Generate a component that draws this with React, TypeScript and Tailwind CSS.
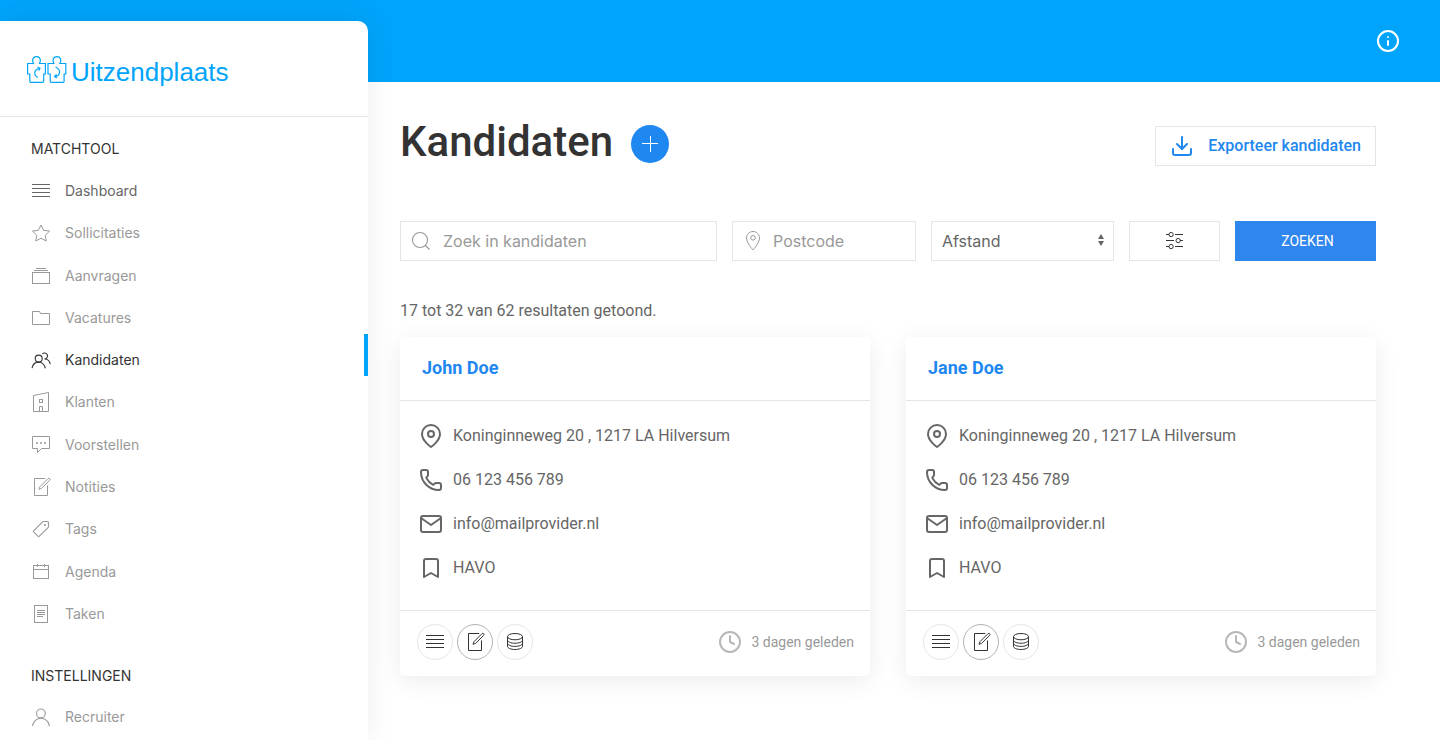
import { ReactNode } from "react";
import {
  Bookmark,
  Clock,
  Download,
  Info,
  Phone,
} from "lucide-react";

const Icon = ({ children }: { children: ReactNode }) => (
  <svg
    width="20"
    height="20"
    viewBox="0 0 20 20"
    fill="none"
    stroke="currentColor"
    className="shrink-0"
    aria-hidden="true"
  >
    {children}
  </svg>
);

const TableIcon = () => (
  <Icon>
    <path d="M1 3.5h18M1 7.5h18M1 11.5h18M1 15.5h18" />
  </Icon>
);

const StarIcon = () => (
  <Icon>
    <polygon points="10 2 12.63 7.27 18.5 8.12 14.25 12.22 15.25 18 10 15.27 4.75 18 5.75 12.22 1.5 8.12 7.37 7.27" />
  </Icon>
);

const AlbumIcon = () => (
  <Icon>
    <path d="M5 2.5h10M3 4.5h14" />
    <rect x="1.5" y="6.5" width="17" height="11" />
  </Icon>
);

const FolderIcon = () => (
  <Icon>
    <polygon points="9.5 5.5 8.5 3.5 1.5 3.5 1.5 16.5 18.5 16.5 18.5 5.5" />
  </Icon>
);

const UsersIcon = () => (
  <Icon>
    <circle strokeWidth="1.1" cx="7.7" cy="8.6" r="3.5" />
    <path
      strokeWidth="1.1"
      d="M1,18.1 C1.7,14.6 4.4,12.1 7.6,12.1 C10.9,12.1 13.7,14.8 14.3,18.3"
    />
    <path
      strokeWidth="1.1"
      d="M11.4,4 C12.8,2.4 15.4,2.8 16.3,4.7 C17.2,6.6 15.7,8.9 13.6,8.9 C16.5,8.9 18.8,11.3 19.2,14.1"
    />
  </Icon>
);

const BuildingIcon = () => (
  <Icon>
    <path d="M2.5 19.5V3.5L17.5 .5v19z" />
    <rect x="8.5" y="7.5" width="3" height="3" />
    <path d="M8.5 19.5v-5h3v5" />
  </Icon>
);

const CommentIcon = () => (
  <Icon>
    <polygon points="1.5 1.5 18.5 1.5 18.5 13.5 10.5 13.5 6.5 17.5 6.5 13.5 1.5 13.5" />
    <g fill="currentColor" stroke="none">
      <circle cx="6" cy="8" r="1" />
      <circle cx="10" cy="8" r="1" />
      <circle cx="14" cy="8" r="1" />
    </g>
  </Icon>
);

const EditIcon = () => (
  <Icon>
    <path d="M18.65,1.68 C18.41,1.45 18.109,1.33 17.81,1.33 C17.499,1.33 17.209,1.45 16.98,1.68 L8.92,9.76 L8,12.33 L10.55,11.41 L18.651,3.34 C19.12,2.87 19.12,2.15 18.65,1.68 Z" />
    <polyline points="16.5 8.482 16.5 18.5 3.5 18.5 3.5 1.5 14.211 1.5" />
  </Icon>
);

const TagIcon = () => (
  <Icon>
    <path
      strokeWidth="1.1"
      d="M17.5,3.71 L17.5,7.72 C17.5,7.96 17.4,8.2 17.21,8.39 L8.39,17.2 C7.99,17.6 7.33,17.6 6.93,17.2 L2.8,13.07 C2.4,12.67 2.4,12.01 2.8,11.61 L11.61,2.8 C11.81,2.6 12.08,2.5 12.34,2.5 L16.19,2.5 C16.52,2.5 16.86,2.63 17.11,2.88 C17.35,3.11 17.48,3.4 17.5,3.71 Z"
    />
    <circle cx="14" cy="6" r="1" fill="currentColor" stroke="none" />
  </Icon>
);

const CalendarIcon = () => (
  <Icon>
    <rect x="2.5" y="3.5" width="15" height="13" />
    <path d="M2.5 7.5h15M6.5 2v3M13.5 2v3" />
  </Icon>
);

const FileIcon = () => (
  <Icon>
    <rect x="3.5" y="1.5" width="13" height="17" />
    <path d="M6 6.5h8M6 8.5h8M6 10.5h8M6 12.5h6" />
  </Icon>
);

const UserIcon = () => (
  <Icon>
    <circle strokeWidth="1.1" cx="9.9" cy="6.4" r="4.4" />
    <path
      strokeWidth="1.1"
      d="M1.5,19 C2.3,14.5 5.8,11.2 10,11.2 C14.2,11.2 17.7,14.6 18.5,19.2"
    />
  </Icon>
);

const SearchIcon = () => (
  <Icon>
    <circle strokeWidth="1.1" cx="9" cy="9" r="7.5" />
    <path strokeWidth="1.1" d="M14,14 L18.5,18.5" />
  </Icon>
);

const LocationIcon = () => (
  <Icon>
    <path d="M10,0.5 C6.41,0.5 3.5,3.39 3.5,6.98 C3.5,11.83 10,19 10,19 C10,19 16.5,11.83 16.5,6.98 C16.5,3.39 13.59,0.5 10,0.5 Z" />
    <circle cx="10" cy="6.8" r="2.3" />
  </Icon>
);

const SettingsIcon = () => (
  <Icon>
    <ellipse cx="6.11" cy="3.55" rx="2.11" ry="2.15" />
    <ellipse cx="6.11" cy="15.55" rx="2.11" ry="2.15" />
    <circle cx="13.15" cy="9.55" r="2.15" />
    <path d="M1 3.5h3M10 3.5h8M1 9.5h8M15 9.5h3M1 15.5h3M10 15.5h8" />
  </Icon>
);

const DatabaseIcon = () => (
  <Icon>
    <ellipse cx="10" cy="4.64" rx="7.5" ry="3.14" />
    <path d="M17.5,8.11 C17.5,9.85 14.14,11.25 10,11.25 C5.86,11.25 2.5,9.84 2.5,8.11" />
    <path d="M17.5,11.25 C17.5,12.99 14.14,14.39 10,14.39 C5.86,14.39 2.5,12.98 2.5,11.25" />
    <path d="M17.49,4.64 L17.5,14.36 C17.5,16.1 14.14,17.5 10,17.5 C5.86,17.5 2.5,16.09 2.5,14.36 L2.5,4.64" />
  </Icon>
);

const PlusIcon = () => (
  <Icon>
    <path d="M2 9.5h16M10.5 2v16" />
  </Icon>
);

const PinIcon = () => (
  <svg
    width="24"
    height="24"
    viewBox="0 0 24 24"
    fill="none"
    stroke="currentColor"
    strokeWidth="2"
    strokeLinecap="round"
    strokeLinejoin="round"
    aria-hidden="true"
  >
    <path d="M21 10c0 7-9 13-9 13s-9-6-9-13a9 9 0 0 1 18 0z" />
    <circle cx="12" cy="10" r="3" />
  </svg>
);

const MailIcon = () => (
  <svg
    width="24"
    height="24"
    viewBox="0 0 24 24"
    fill="none"
    stroke="currentColor"
    strokeWidth="2"
    strokeLinecap="round"
    strokeLinejoin="round"
    aria-hidden="true"
  >
    <path d="M4 4h16c1.1 0 2 .9 2 2v12c0 1.1-.9 2-2 2H4c-1.1 0-2-.9-2-2V6c0-1.1.9-2 2-2z" />
    <polyline points="22 6 12 13 2 6" />
  </svg>
);

const Logo = () => (
  <a href="#" className="flex items-start gap-1 text-[#00a4fb]">
    <svg
      width="40"
      height="28"
      viewBox="0 0 40 28"
      fill="none"
      stroke="currentColor"
      strokeWidth="1.2"
      aria-hidden="true"
    >
      <path d="M.6 7.5H6.5C4.5 4 6 .7 9.5 .7S14.5 4 12.5 7.5H18.4V18H16.7V25.2Q16.7 26.4 15.5 26.4H4Q2.8 26.4 2.8 25.2V18H.6Z" />
      <path d="M21 7.5H26.9C24.9 4 26.4 .7 29.9 .7S34.9 4 32.9 7.5H38.8V18H37.1V25.2Q37.1 26.4 35.9 26.4H24.4Q23.2 26.4 23.2 25.2V18H21Z" />
      <path d="M11 21.5C6.5 19.5 6.5 13.5 12.5 12.3M10.5 11l2.5 1.2-1.3 2.5" />
      <path d="M28.5 11C34 13.5 34 19.5 28 20.7M29.5 18.5l-2 2.2 2.5 1.3" />
    </svg>
    <span className="font-['Liberation_Sans',sans-serif] text-[26px] leading-8">
      Uitzendplaats
    </span>
  </a>
);

const navItems = [
  { label: "Dashboard", icon: <TableIcon />, color: "text-[#666]" },
  { label: "Sollicitaties", icon: <StarIcon />, color: "text-[#999]" },
  { label: "Aanvragen", icon: <AlbumIcon />, color: "text-[#999]" },
  { label: "Vacatures", icon: <FolderIcon />, color: "text-[#999]" },
  {
    label: "Kandidaten",
    icon: <UsersIcon />,
    color: "border-r-4 border-[#00a4fb] text-[#333]",
  },
  { label: "Klanten", icon: <BuildingIcon />, color: "text-[#999]" },
  { label: "Voorstellen", icon: <CommentIcon />, color: "text-[#999]" },
  { label: "Notities", icon: <EditIcon />, color: "text-[#999]" },
  { label: "Tags", icon: <TagIcon />, color: "text-[#999]" },
  { label: "Agenda", icon: <CalendarIcon />, color: "text-[#999]" },
  { label: "Taken", icon: <FileIcon />, color: "text-[#999]" },
];

const candidates = [
  {
    name: "John Doe",
    address: "Koninginneweg 20 , 1217 LA Hilversum",
    phone: "06 123 456 789",
    email: "info@mailprovider.nl",
    education: "HAVO",
    added: "3 dagen geleden",
  },
  {
    name: "Jane Doe",
    address: "Koninginneweg 20 , 1217 LA Hilversum",
    phone: "06 123 456 789",
    email: "info@mailprovider.nl",
    education: "HAVO",
    added: "3 dagen geleden",
  },
];

export default function App() {
  return (
    <div className="flex min-h-screen flex-col bg-white font-[Roboto,sans-serif] text-[#666]">
      <header className="flex h-[82px] items-center justify-end bg-[#00a4fb] px-10">
        <button aria-label="Informatie" className="text-white">
          <Info size={24} />
        </button>
      </header>
      <div className="flex flex-1">
        <Sidebar />
        <main className="min-w-0 flex-1 pl-8 pr-16">
          <div className="flex items-end justify-between pt-8">
            <div className="flex items-end gap-[18px]">
              <h1 className="text-[42px] font-medium leading-[56px] text-[#333]">
                Kandidaten
              </h1>
              <button
                aria-label="Kandidaat toevoegen"
                className="mb-[7px] flex size-[38px] items-center justify-center rounded-full bg-[#1e87f0] text-white"
              >
                <PlusIcon />
              </button>
            </div>
            <button className="mb-1 flex h-10 items-center gap-[14px] border border-[#e5e5e5] px-[14px] font-medium text-[#1e87f0]">
              <Download size={24} />
              Exporteer kandidaten
            </button>
          </div>
          <Filters />
          <p className="mt-[38px] leading-6">
            17 tot 32 van 62 resultaten getoond.
          </p>
          <div className="mt-[14px] grid grid-cols-2 gap-9">
            {candidates.map((candidate) => (
              <CandidateCard key={candidate.name} candidate={candidate} />
            ))}
          </div>
        </main>
      </div>
    </div>
  );
}

const Sidebar = () => (
  <aside className="-mt-[61px] w-[368px] shrink-0 rounded-tr-[10px] bg-white font-[Inter,sans-serif] text-sm shadow-[0_0_30px_rgba(0,0,0,0.08)]">
    <div className="border-b border-[#e5e5e5] px-[27px] pb-7 pt-[35px]">
      <Logo />
    </div>
    <nav>
      <h2 className="px-[31px] pt-[22px] leading-5 text-[#333]">MATCHTOOL</h2>
      {/* Menu rows share the height of the list equally */}
      <ul className="mt-[6px] grid h-[465px] auto-rows-fr">
        {navItems.map((item) => (
          <li key={item.label} className={`flex ${item.color}`}>
            <a
              href="#"
              className="flex flex-1 items-center gap-[14px] pl-[31px] pt-[10px]"
            >
              {item.icon}
              {item.label}
            </a>
          </li>
        ))}
      </ul>
      <h2 className="px-[31px] pt-9 leading-5 text-[#333]">INSTELLINGEN</h2>
      <a
        href="#"
        className="flex items-center gap-[14px] pl-[31px] pt-[21px] text-[#999]"
      >
        <UserIcon />
        Recruiter
      </a>
    </nav>
  </aside>
);

const Filters = () => (
  <form
    className="mt-[51px] grid grid-cols-[317fr_184fr_183fr_91fr_141fr] gap-[15px] font-[Inter,sans-serif]"
    onSubmit={(e) => e.preventDefault()}
  >
    <label className="flex h-10 items-center gap-3 border border-[#e5e5e5] px-[10px] text-[#999]">
      <SearchIcon />
      <input
        type="text"
        aria-label="Zoek in kandidaten"
        placeholder="Zoek in kandidaten"
        className="w-full min-w-0 outline-none placeholder:text-[#999]"
      />
    </label>
    <label className="flex h-10 items-center gap-[10px] border border-[#e5e5e5] px-[10px] text-[#999]">
      <LocationIcon />
      <input
        type="text"
        aria-label="Postcode"
        placeholder="Postcode"
        className="w-full min-w-0 outline-none placeholder:text-[#999]"
      />
    </label>
    <div className="grid h-10 items-center border border-[#e5e5e5]">
      <select
        aria-label="Afstand"
        className="col-start-1 row-start-1 h-full w-full appearance-none bg-transparent px-[10px] outline-none"
      >
        <option>Afstand</option>
      </select>
      <svg
        width="24"
        height="16"
        viewBox="0 0 24 16"
        fill="currentColor"
        className="pointer-events-none col-start-1 row-start-1 justify-self-end"
        aria-hidden="true"
      >
        <polygon points="12 1 9 6 15 6" />
        <polygon points="12 13 9 8 15 8" />
      </svg>
    </div>
    <button
      type="button"
      aria-label="Filters"
      className="flex h-10 items-center justify-center border border-[#e5e5e5] text-[#333]"
    >
      <SettingsIcon />
    </button>
    <button
      type="submit"
      className="h-10 bg-[#2f86ee] pl-1 font-[Roboto,sans-serif] text-sm text-white"
    >
      ZOEKEN
    </button>
  </form>
);

const CandidateCard = ({
  candidate,
}: {
  candidate: (typeof candidates)[number];
}) => (
  <article className="rounded-[5px] bg-white shadow-[0_5px_25px_rgba(0,0,0,0.08)]">
    <h3 className="border-b border-[#e5e5e5] px-[22px] pb-5 pt-[19px] text-lg font-bold leading-6 text-[#1e87f0]">
      <a href="#">{candidate.name}</a>
    </h3>
    <ul className="flex flex-col gap-[18px] border-b border-[#e5e5e5] px-[19px] pb-[29px] pt-[22px] leading-[26px]">
      <li className="flex items-center gap-[10px]">
        <PinIcon />
        {candidate.address}
      </li>
      <li className="flex items-center gap-[10px]">
        <Phone size={24} />
        {candidate.phone}
      </li>
      <li className="flex items-center gap-[10px]">
        <MailIcon />
        {candidate.email}
      </li>
      <li className="flex items-center gap-[10px]">
        <Bookmark size={24} />
        {candidate.education}
      </li>
    </ul>
    <div className="flex items-center justify-between px-4 pb-4 pl-[17px] pt-[13px]">
      <div className="flex gap-1 text-[#333]">
        <button
          aria-label="Details"
          className="flex size-9 items-center justify-center rounded-full border border-[#e5e5e5]"
        >
          <TableIcon />
        </button>
        <button
          aria-label="Notitie"
          className="flex size-9 items-center justify-center rounded-full border border-[#b2b2b2]"
        >
          <EditIcon />
        </button>
        <button
          aria-label="Dossier"
          className="flex size-9 items-center justify-center rounded-full border border-[#e5e5e5]"
        >
          <DatabaseIcon />
        </button>
      </div>
      <p className="flex items-center gap-[9px] text-sm text-[#999]">
        <Clock size={24} className="text-[#b8b8b8]" />
        {candidate.added}
      </p>
    </div>
  </article>
);
